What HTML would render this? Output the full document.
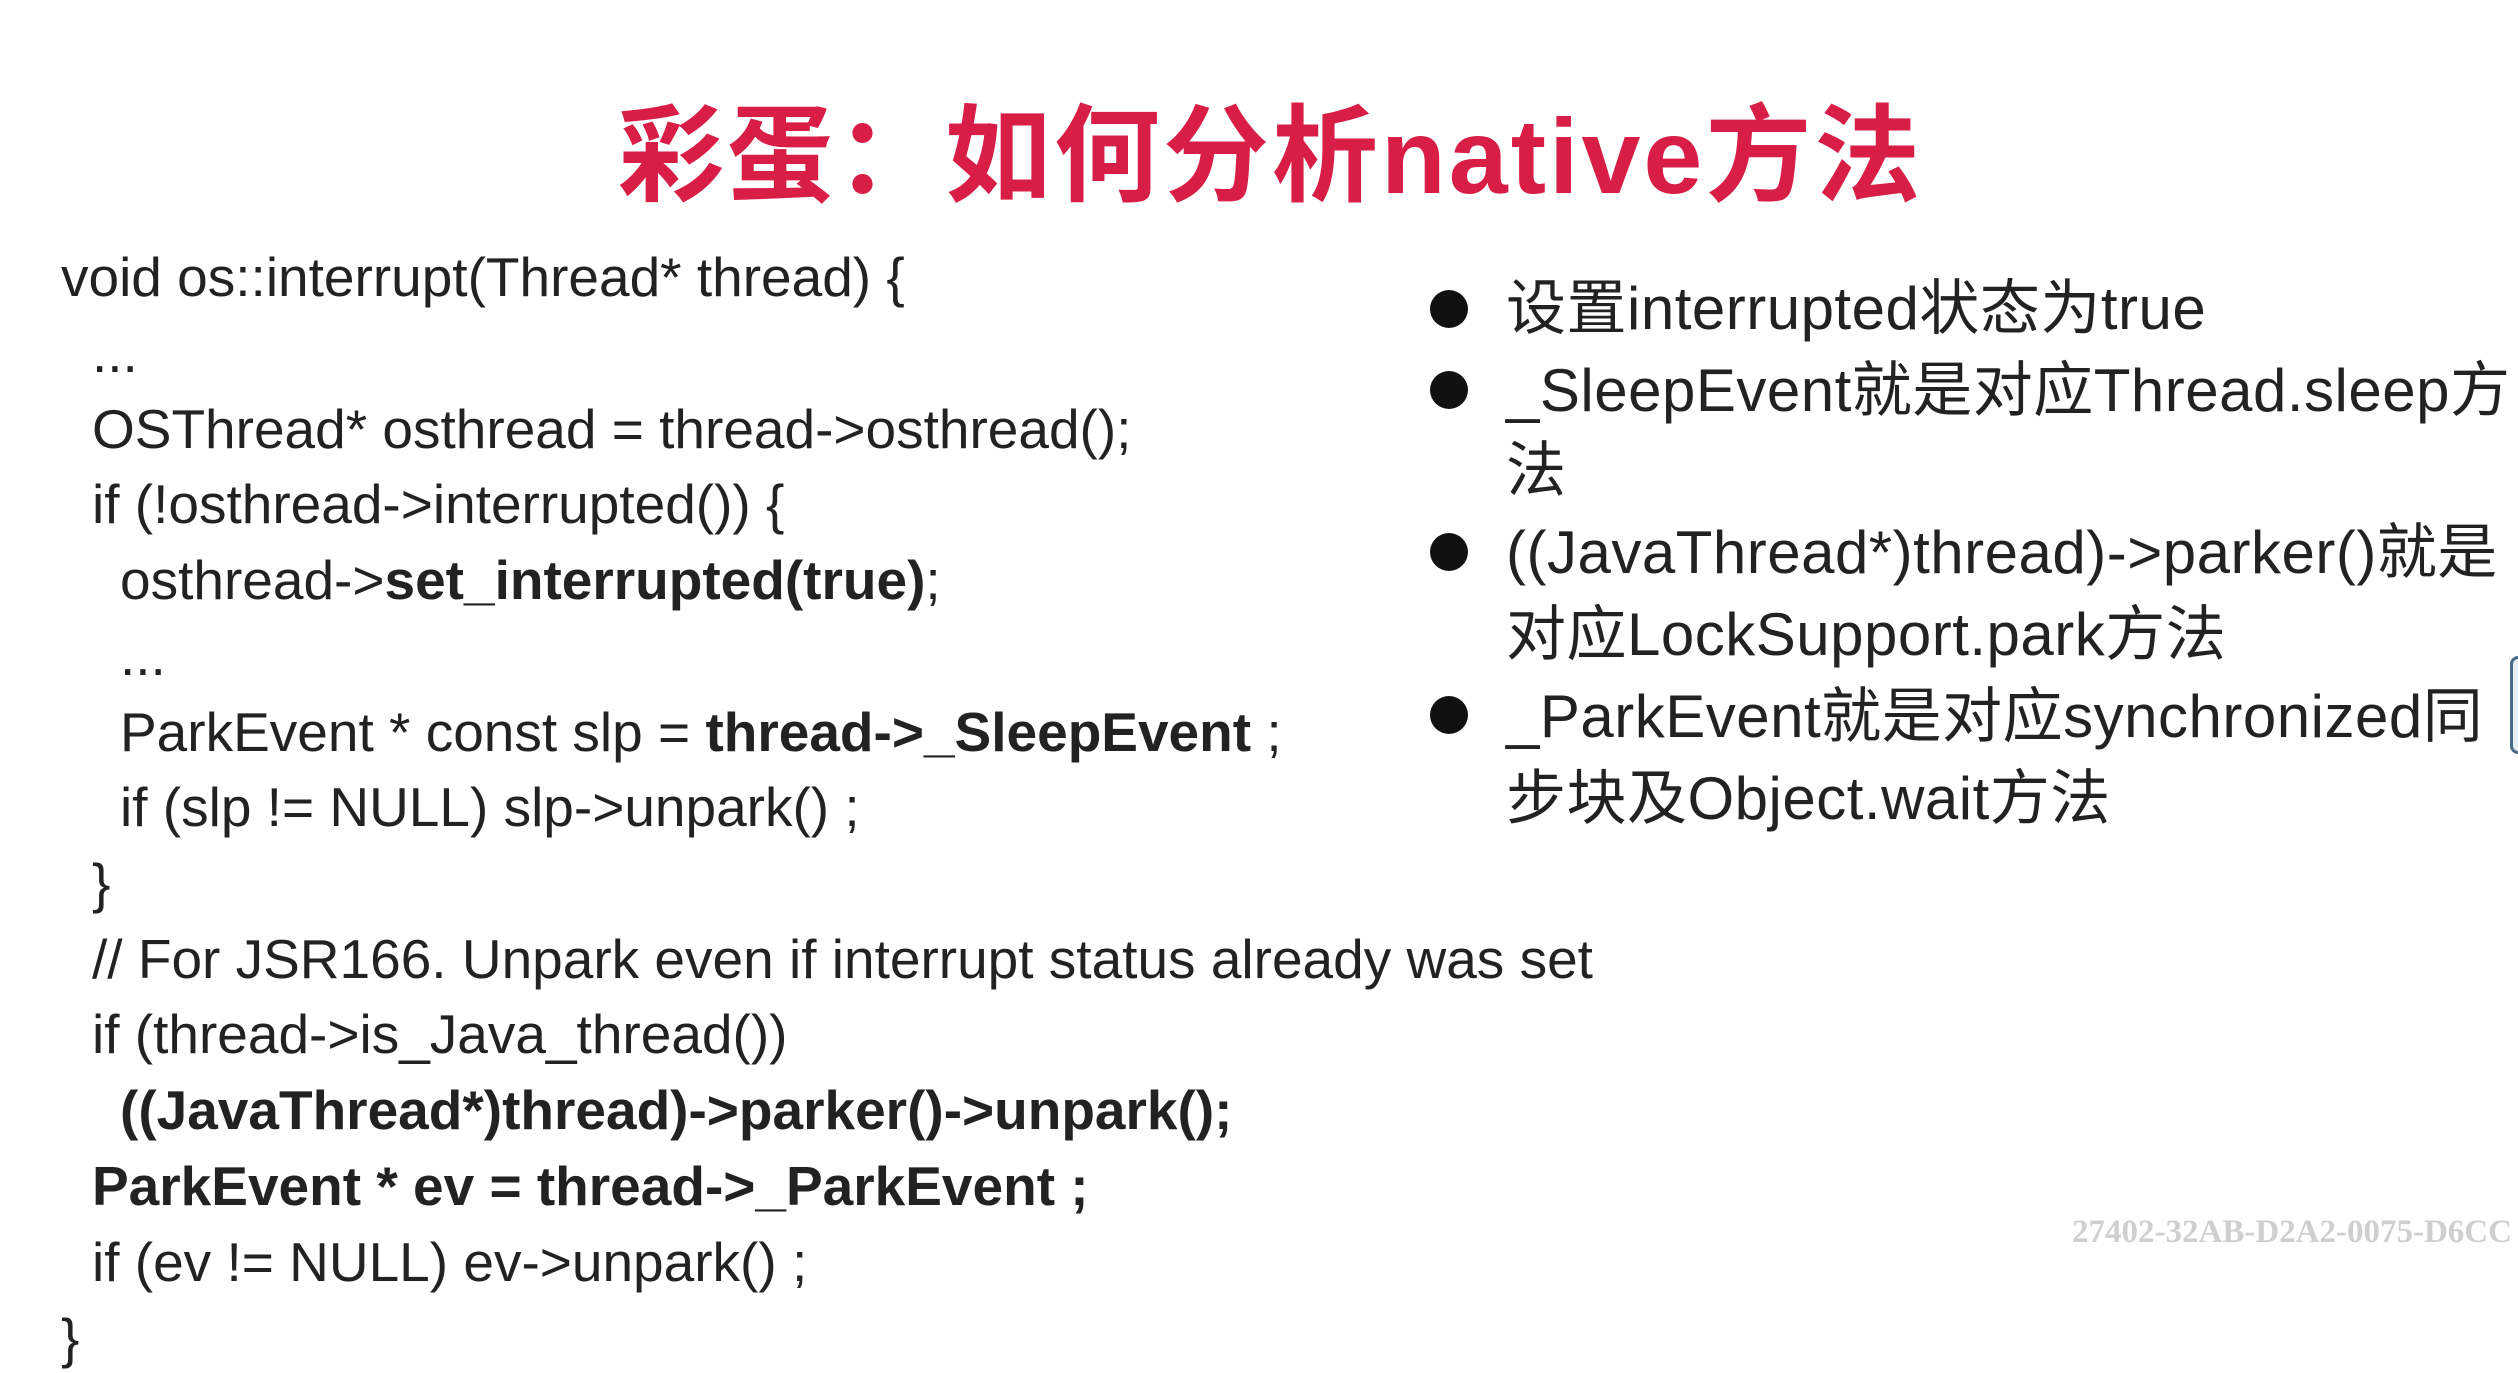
<!DOCTYPE html>
<html><head><meta charset="utf-8">
<style>
html,body{margin:0;padding:0;background:#fff;}
body{width:2518px;height:1373px;position:relative;overflow:hidden;font-family:"Liberation Sans","Noto Sans CJK SC",sans-serif;color:#222;}
.t{position:absolute;white-space:nowrap;}
.title{left:618px;top:104px;font-size:106px;line-height:106px;font-weight:bold;color:#d81e46;font-family:"Liberation Sans","Noto Sans CJK SC",sans-serif;letter-spacing:3px;}
.c{position:absolute;white-space:nowrap;font-size:55px;line-height:55px;letter-spacing:0;color:#222;}
.r{position:absolute;white-space:nowrap;font-size:60px;line-height:60px;color:#222;left:1506px;letter-spacing:0.5px;}
.dot{position:absolute;left:1430px;width:38px;height:38px;border-radius:50%;background:#111;}
b{font-weight:bold;}
.wm{position:absolute;left:2072px;top:1216px;font-family:"Liberation Serif",serif;font-weight:bold;font-size:33px;line-height:33px;color:#cfcfcf;white-space:nowrap;}
</style></head><body>
<div class="t title">彩蛋：如何分析native方法</div>

<div class="c" style="left:61px;top:250px">void os::interrupt(Thread* thread) {</div>
<div class="c" style="left:92px;top:326px">...</div>
<div class="c" style="left:92px;top:402px">OSThread* osthread = thread-&gt;osthread();</div>
<div class="c" style="left:92px;top:477px">if (!osthread-&gt;interrupted()) {</div>
<div class="c" style="left:120px;top:553px">osthread-&gt;<b>set_interrupted(true)</b>;</div>
<div class="c" style="left:120px;top:629px">...</div>
<div class="c" style="left:120px;top:705px">ParkEvent * const slp = <b>thread-&gt;_SleepEvent</b> ;</div>
<div class="c" style="left:120px;top:780px">if (slp != NULL) slp-&gt;unpark() ;</div>
<div class="c" style="left:92px;top:856px">}</div>
<div class="c" style="left:92px;top:932px">// For JSR166. Unpark even if interrupt status already was set</div>
<div class="c" style="left:92px;top:1007px">if (thread-&gt;is_Java_thread())</div>
<div class="c" style="left:120px;top:1083px"><b>((JavaThread*)thread)-&gt;parker()-&gt;unpark();</b></div>
<div class="c" style="left:92px;top:1159px"><b>ParkEvent * ev = thread-&gt;_ParkEvent ;</b></div>
<div class="c" style="left:92px;top:1235px">if (ev != NULL) ev-&gt;unpark() ;</div>
<div class="c" style="left:61px;top:1311px">}</div>

<div class="dot" style="top:290px"></div>
<div class="dot" style="top:371px"></div>
<div class="dot" style="top:533px"></div>
<div class="dot" style="top:696px"></div>
<div class="r" style="top:279px">设置interrupted状态为true</div>
<div class="r" style="top:361px">_SleepEvent就是对应Thread.sleep方</div>
<div class="r" style="top:441px">法</div>
<div class="r" style="top:523px">((JavaThread*)thread)-&gt;parker()就是</div>
<div class="r" style="top:605px">对应LockSupport.park方法</div>
<div class="r" style="top:687px">_ParkEvent就是对应synchronized同</div>
<div class="r" style="top:769px">步块及Object.wait方法</div>

<div class="wm">27402-32AB-D2A2-0075-D6CC</div>
<div style="position:absolute;left:2510px;top:656px;width:14px;height:92px;border:3px solid #4a6a8a;border-radius:8px;background:#e8eef4;"></div>
</body></html>
